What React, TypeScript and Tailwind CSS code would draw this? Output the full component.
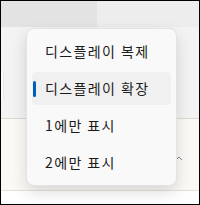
import React from "react";

const ITEMS = [
  { label: "디스플레이 복제", selected: false },
  { label: "디스플레이 확장", selected: true },
  { label: "1에만 표시", selected: false },
  { label: "2에만 표시", selected: false },
];

export default function App() {
  return (
    <div className="w-[200px] h-[205px] border border-black bg-white overflow-hidden">
      <div
        className="relative w-full h-full flex flex-col"
        style={{ fontFamily: '"Noto Sans CJK KR", "Noto Sans", sans-serif' }}
      >
        {/* top strip */}
        <div className="flex h-[26px]">
          <div className="w-[96px] bg-[#e3e3e3]" />
          <div className="flex-1 bg-[#ededed]" />
        </div>

        {/* settings band */}
        <div className="h-[91px] bg-[#f3f3f3] flex items-start pt-[43px]">
          <div className="w-[3px] h-[31px] bg-[#fbfbfb] rounded-r-[3px] border-r border-[#e6e6e6]" />
        </div>

        {/* lower band */}
        <div className="h-[72px] border-t border-[#dcd9d2] bg-[#faf9f6] flex justify-end pr-[16px] pt-[36px]">
          <svg width="8" height="6" viewBox="0 0 8 6" className="opacity-70">
            <path d="M1 5 L4 2 L7 5" fill="none" stroke="#555" strokeWidth="1" />
          </svg>
        </div>
        <div className="flex-1 border-t border-[#e4e1da] bg-white" />

        {/* flyout menu */}
        <div className="absolute left-[25px] top-[27px] w-[151px] rounded-[8px] bg-[#f9f9f9] border border-[#e3e3e3] shadow-[0_6px_16px_rgba(0,0,0,0.14)] px-[5px] py-[6px] flex flex-col gap-[4px]">
          {ITEMS.map((item) => (
            <div
              key={item.label}
              className={`relative h-[33px] flex items-center pl-[13px] rounded-[4px] text-[14px] tracking-[1.4px] text-[#1b1b1b] ${
                item.selected ? "bg-[#f0f0f0]" : ""
              }`}
            >
              {item.selected && (
                <span className="absolute left-[1px] top-[9px] w-[3px] h-[16px] rounded-full bg-[#005fb8]" />
              )}
              {item.label}
            </div>
          ))}
        </div>
      </div>
    </div>
  );
}
